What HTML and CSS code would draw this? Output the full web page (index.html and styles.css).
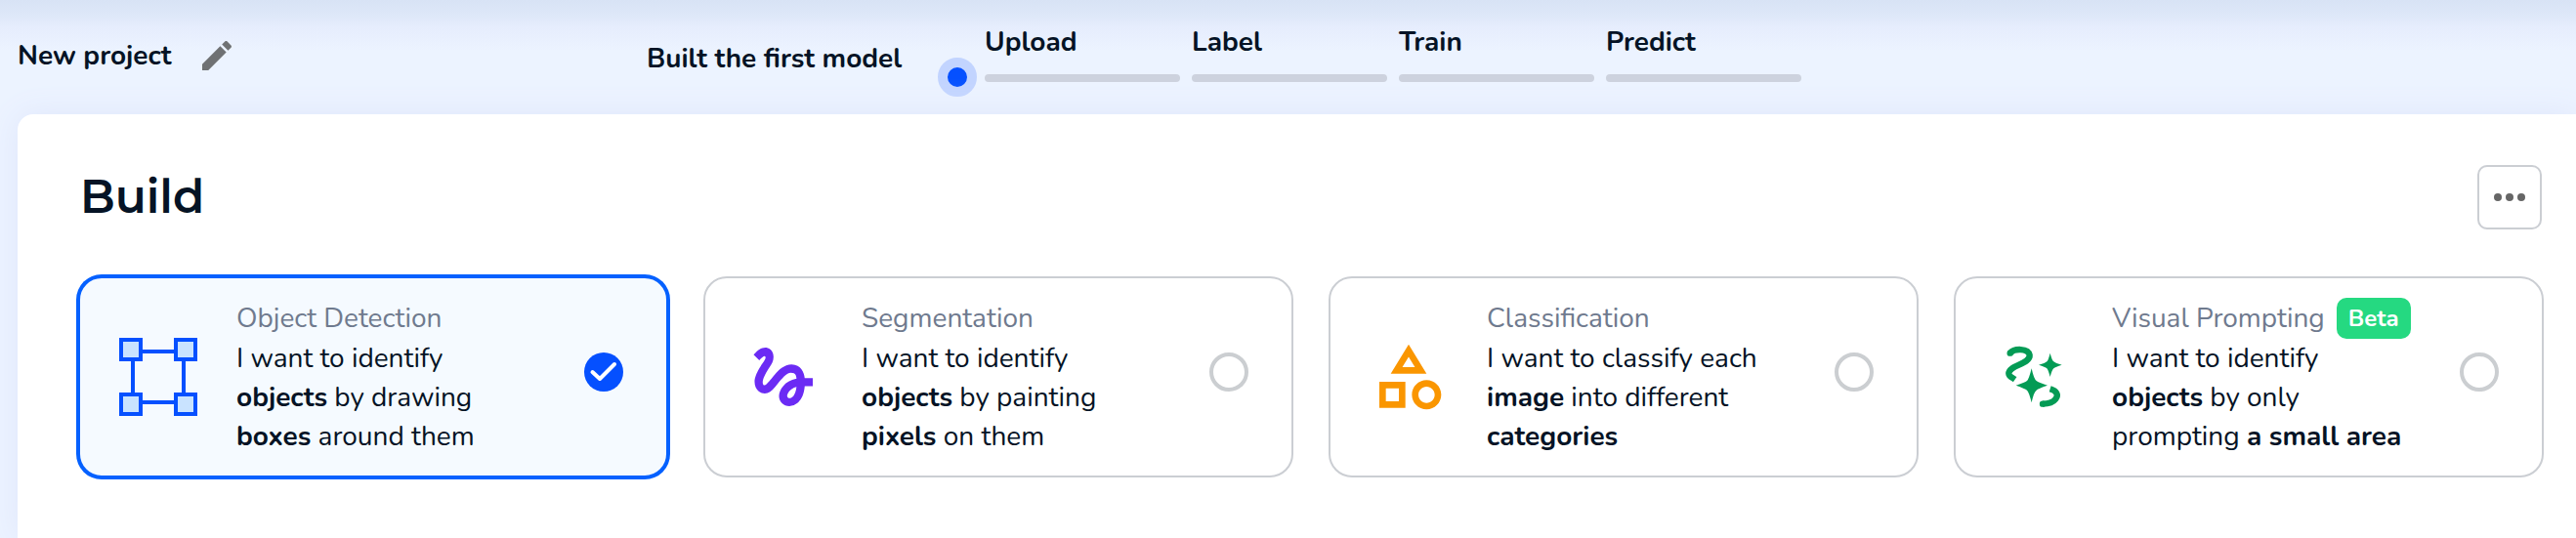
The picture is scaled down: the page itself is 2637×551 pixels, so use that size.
FILE: index.html
```html
<!DOCTYPE html>
<html lang="en">
<head>
<meta charset="utf-8">
<title>New project</title>
<meta name="viewport" content="width=device-width, initial-scale=1">
<link rel="stylesheet" href="styles.css">
</head>
<body>
<header class="topbar">
  <div class="project">
    <span class="project-name">New project</span>
    <button class="icon-button" type="button" aria-label="Rename project">
      <svg class="pencil" viewBox="0 0 24 24" aria-hidden="true"><path d="M3 17.25V21h3.75L17.81 9.94l-3.75-3.75L3 17.25zM20.71 7.04c.39-.39.39-1.02 0-1.41l-2.34-2.34c-.39-.39-1.02-.39-1.41 0l-1.83 1.83 3.75 3.75 1.83-1.83z"/></svg>
    </button>
  </div>
  <div class="progress">
    <span class="progress-title">Built the first model</span>
    <span class="progress-dot"></span>
    <ol class="steps">
      <li class="step">Upload</li>
      <li class="step">Label</li>
      <li class="step">Train</li>
      <li class="step">Predict</li>
    </ol>
  </div>
</header>
<main class="panel">
  <div class="panel-head">
    <h1 class="title">Build</h1>
    <button class="more" type="button" aria-label="More options"><span class="more-dot"></span><span class="more-dot"></span><span class="more-dot"></span></button>
  </div>
  <div class="cards" role="radiogroup" aria-label="Project type">
    <label class="card">
      <svg class="card-icon" viewBox="0 0 80 80" aria-hidden="true">
        <path d="M14 14H66V66H14Z" fill="none" stroke="#0550ff" stroke-width="4"/>
        <g fill="#c9e3ff" stroke="#0550ff" stroke-width="4"><path d="M2 2H22V22H2Z"/><path d="M58 2H78V22H58Z"/><path d="M2 58H22V78H2Z"/><path d="M58 58H78V78H58Z"/></g>
      </svg>
      <span class="card-text"><span class="card-name">Object Detection</span><span class="card-desc">I want to identify <b>objects</b> by drawing <b>boxes</b> around them</span></span>
      <input class="radio" type="radio" name="type" checked>
    </label>
    <label class="card">
      <svg class="card-icon" viewBox="0 0 24 24" fill="#6b2bf4" aria-hidden="true"><path d="M4.59 6.89c.7-.71 1.4-1.35 1.71-1.22.5.2 0 1.03-.3 1.52-.25.42-2.86 3.89-2.86 6.31 0 1.28.48 2.34 1.34 2.98.75.56 1.74.73 2.64.46 1.07-.31 1.95-1.4 3.06-2.77 1.21-1.49 2.83-3.44 4.08-3.44 1.63 0 1.65 1.01 1.76 1.79-3.78.64-5.38 3.67-5.38 5.37 0 1.7 1.44 3.09 3.21 3.09 1.63 0 4.29-1.33 4.69-6.1H21v-2.5h-2.47c-.15-1.65-1.09-4.2-4.03-4.2-2.25 0-4.18 1.91-4.94 2.84-.58.73-2.06 2.48-2.29 2.72-.25.3-.68.84-1.11.84-.45 0-.72-.83-.36-1.92.35-1.09 1.4-2.86 1.85-3.52.78-1.14 1.3-1.92 1.3-3.28C8.95 3.69 7.31 3 6.44 3 5.12 3 3.97 4 3.72 4.25c-.36.36-.66.66-.88.93l1.75 1.71zm9.29 11.66c-.31 0-.74-.26-.74-.72 0-.6.73-2.2 2.87-2.76-.3 2.69-1.43 3.48-2.13 3.48z"/></svg>
      <span class="card-text"><span class="card-name">Segmentation</span><span class="card-desc">I want to identify <b>objects</b> by painting <b>pixels</b> on them</span></span>
      <input class="radio" type="radio" name="type">
    </label>
    <label class="card">
      <svg class="card-icon" viewBox="0 0 24 24" fill="#fa9600" aria-hidden="true"><path d="M12 2l-5.5 9h11L12 2zm0 3.84L13.93 9h-3.87L12 5.84zM17.5 13c-2.49 0-4.5 2.01-4.5 4.5s2.01 4.5 4.5 4.5 4.5-2.01 4.5-4.5-2.01-4.5-4.5-4.5zm0 7c-1.38 0-2.5-1.12-2.5-2.5s1.12-2.5 2.5-2.5 2.5 1.12 2.5 2.5-1.12 2.5-2.5 2.5zM3 21.5h8v-8H3v8zm2-6h4v4H5v-4z"/></svg>
      <span class="card-text"><span class="card-name">Classification</span><span class="card-desc">I want to classify each <b>image</b> into different <b>categories</b></span></span>
      <input class="radio" type="radio" name="type">
    </label>
    <label class="card">
      <svg class="card-icon" viewBox="36 48 240 240" aria-hidden="true">
        <g fill="none" stroke="#049b55" stroke-width="19">
          <path d="M83 95C95 80 139 79 143 101C146 129 78 132 79 158C79 166 88 169 98 176"/>
          <path d="M206 205C228 212 232 224 223 236C214 248 199 251 183 251"/>
        </g>
        <g fill="#049b55"><circle cx="83" cy="95" r="9.500"/><circle cx="183" cy="251" r="9.500"/><path d="M149 142Q156 175 164 180Q170 185 198 194Q168 204 164 209Q156 214 149 247Q141 214 135 209Q129 204 101 194Q129 185 135 180Q141 175 149 142Z"/><path d="M206 95Q212 118 217 121Q222 126 242 131Q222 137 217 142Q212 146 206 168Q200 146 196 142Q191 137 171 131Q191 126 196 121Q200 118 206 95Z"/></g>
      </svg>
      <span class="card-text"><span class="card-name">Visual Prompting <span class="badge">Beta</span></span><span class="card-desc">I want to identify <b>objects</b> by only<br>prompting <b>a small area</b></span></span>
      <input class="radio" type="radio" name="type">
    </label>
  </div>
</main>
</body>
</html>
```
FILE: styles.css
```css
* { box-sizing: border-box; }

body {
  margin: 0;
  min-height: 100vh;
  display: flex;
  flex-direction: column;
  overflow-x: hidden;
  background: linear-gradient(#d8e3f5, #dde7f8 14px, #e6edfd 28px, #ecf3ff 52px) #ecf3ff;
  color: #051325;
  font-family: Nunito, Lato, sans-serif;
  font-size: 28px;
  line-height: 40px;
}

button { padding: 0; background: none; border: 0; cursor: pointer; }

.topbar {
  display: grid;
  grid-template-columns: 644px 1fr;
  padding: 20px 18px 18px;
  font-weight: 700;
}

.project { display: flex; align-items: center; gap: 26px; height: 74px; }
.icon-button { display: flex; }
.pencil { width: 40px; height: 40px; fill: #6f7173; }

.progress { display: flex; align-items: center; height: 79px; }
.progress-title { width: 298px; }
.progress-dot {
  align-self: flex-end;
  width: 40px;
  height: 40px;
  margin-right: 8px;
  border: 10px solid #c2d4ff;
  border-radius: 50%;
  background: #0550ff;
}
.steps {
  display: flex;
  align-self: flex-start;
  gap: 12px;
  margin: 0;
  padding: 3px 0 0;
  list-style: none;
}
.step { width: 200px; }
.step::after {
  content: "";
  display: block;
  height: 8px;
  margin-top: 13px;
  border-radius: 4px;
  background: #cdd2de;
}

.panel {
  flex: 1;
  margin-left: 18px;
  padding: 52px 33px 60px 62px;
  border-top-left-radius: 16px;
  background: #fff;
  box-shadow: 0 0 32px #dfe6fb;
}
.panel-head { display: flex; align-items: center; justify-content: space-between; padding: 0 2px; }
.title {
  margin: 0;
  font: 600 47px/66px Montserrat, Inter, sans-serif;
}
.more {
  display: flex;
  align-items: center;
  justify-content: center;
  gap: 4px;
  width: 66px;
  height: 66px;
  border: 2px solid #cbced3;
  border-radius: 10px;
}
.more-dot { width: 8px; height: 8px; border-radius: 50%; background: #666; }

.cards {
  display: grid;
  grid-template-columns: repeat(4, 1fr);
  gap: 36px;
  margin-top: 48px;
}
.card {
  display: grid;
  grid-template-columns: 80px 1fr 40px;
  align-items: center;
  column-gap: 40px;
  padding: 20px 44px 20px 40px;
  border: 2px solid #cbced3;
  border-radius: 24px;
  cursor: pointer;
}
.card:has(.radio:checked) {
  border-color: #0561ff;
  box-shadow: 0 0 0 2px #0561ff;
  background: #f5faff;
}
.card-icon { width: 80px; height: 80px; }
.card-name { display: flex; align-items: center; gap: 12px; height: 42px; color: #6f7a8e; white-space: nowrap; }
.card-desc { display: block; max-width: 310px; }
.card-desc b { font-weight: 700; }
.badge {
  padding: 0 12px;
  border-radius: 10px;
  background: #25d981;
  color: #fff;
  font-size: 24px;
  font-weight: 700;
  line-height: 42px;
}
.radio {
  appearance: none;
  width: 40px;
  height: 40px;
  margin: 0 0 10px;
  border: 4px solid #cbced1;
  border-radius: 50%;
}
.radio:checked {
  border: 0;
  background: #0550ff url("data:image/svg+xml,%3Csvg xmlns='http://www.w3.org/2000/svg' viewBox='0 0 40 40'%3E%3Cpath d='M8.500 20L16 27L31 12' fill='none' stroke='white' stroke-width='4' stroke-linecap='round' stroke-linejoin='round'/%3E%3C/svg%3E");
}
```
